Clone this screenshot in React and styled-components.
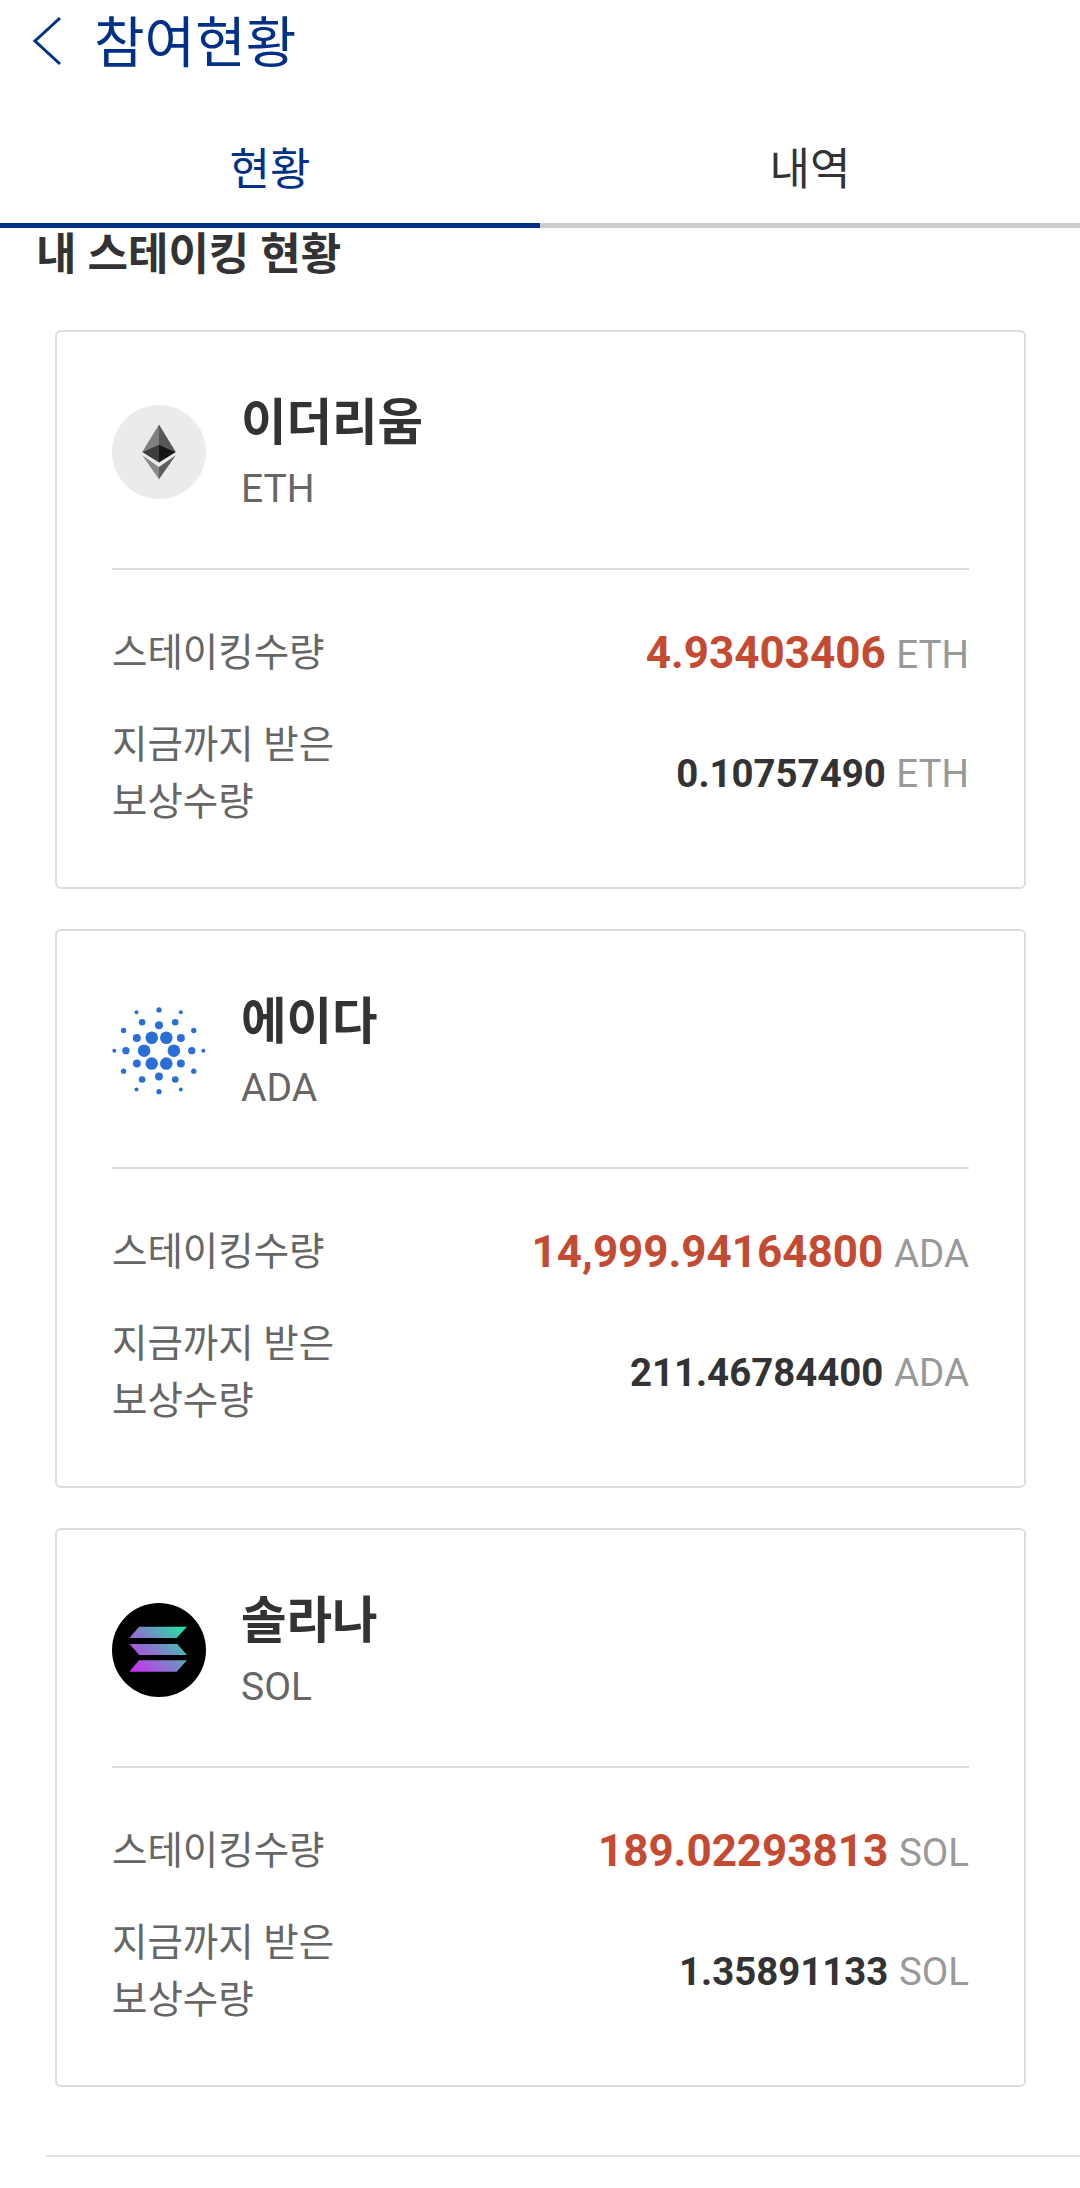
import React from "react";
import styled, { createGlobalStyle } from "styled-components";

const GlobalStyle = createGlobalStyle`
  html, body {
    margin: 0;
    padding: 0;
    background: #fff;
  }
  body {
    font-family: Roboto, "Noto Sans CJK KR", sans-serif;
  }
  * {
    box-sizing: border-box;
  }
`;

const ADA_DOTS = [
  [185, 173, 19], [229, 173, 19], [162, 212, 19], [252, 212, 19], [185, 251, 19], [229, 251, 19],
  [140, 174, 12], [273, 174, 12], [107, 212, 11], [306, 212, 11], [140, 251, 12], [273, 251, 12],
  [207, 135, 12], [207, 290, 12],
  [156, 126, 10], [256, 126, 10], [156, 299, 10], [256, 299, 10],
  [100, 151, 8], [312, 151, 8], [100, 274, 8], [312, 274, 8],
  [139, 96, 6], [273, 96, 6], [139, 329, 6], [273, 329, 6],
  [207, 89, 8], [207, 336, 8], [72, 212, 6], [341, 212, 6],
];

const EthIcon = () => (
  <svg width="94" height="94" viewBox="67 47 280 280">
    <circle cx="207" cy="187" r="140" fill="#ebebeb" />
    <polygon points="207,105 157,187 207,165" fill="#808080" />
    <polygon points="207,105 257,187 207,165" fill="#565656" />
    <polygon points="207,165 157,187 207,218" fill="#3c3c3c" />
    <polygon points="207,165 257,187 207,218" fill="#161616" />
    <polygon points="157,197 207,268 207,232" fill="#8a8a8a" />
    <polygon points="257,197 207,268 207,232" fill="#5e5e5e" />
  </svg>
);

const AdaIcon = () => (
  <svg width="94" height="94" viewBox="65 71 284 284">
    {ADA_DOTS.map(([x, y, r], i) => (
      <circle key={i} cx={x} cy={y} r={r} fill="#2a6fd6" />
    ))}
  </svg>
);

const SolIcon = () => (
  <svg width="94" height="94" viewBox="66 69 282 282">
    <defs>
      <linearGradient id="solGrad" gradientUnits="userSpaceOnUse" x1="125" y1="285" x2="285" y2="130">
        <stop offset="0" stopColor="#cf2bf2" />
        <stop offset="0.5" stopColor="#7d82c8" />
        <stop offset="1" stopColor="#16f0a0" />
      </linearGradient>
    </defs>
    <circle cx="207" cy="210" r="141" fill="#000" />
    <polygon points="147,140 291,140 260,174 118,174" fill="url(#solGrad)" />
    <polygon points="118,192 262,192 291,225 148,225" fill="url(#solGrad)" />
    <polygon points="147,241 291,241 260,275 118,275" fill="url(#solGrad)" />
  </svg>
);

const COINS = [
  { name: "이더리움", unit: "ETH", staked: "4.93403406", reward: "0.10757490", icon: <EthIcon /> },
  { name: "에이다", unit: "ADA", staked: "14,999.94164800", reward: "211.46784400", icon: <AdaIcon /> },
  { name: "솔라나", unit: "SOL", staked: "189.02293813", reward: "1.35891133", icon: <SolIcon /> },
];

export default function App() {
  return (
    <Page>
      <GlobalStyle />
      <Header>
        <BackIcon width="30" height="50" viewBox="0 0 30 50">
          <polyline points="28,2 3,25 28,48" />
        </BackIcon>
        <HeaderTitle>참여현황</HeaderTitle>
      </Header>
      <Tabs>
        <Tab $active>현황</Tab>
        <Tab>내역</Tab>
      </Tabs>
      <SectionTitle>내 스테이킹 현황</SectionTitle>
      <CardList>
        {COINS.map((coin) => (
          <Card key={coin.unit}>
            <CardHead>
              <IconWrap>{coin.icon}</IconWrap>
              <CoinText>
                <CoinName>{coin.name}</CoinName>
                <CoinUnit>{coin.unit}</CoinUnit>
              </CoinText>
            </CardHead>
            <Row>
              <Label>스테이킹수량</Label>
              <Value>
                <Amount $red>{coin.staked}</Amount> <Unit>{coin.unit}</Unit>
              </Value>
            </Row>
            <RewardRow>
              <Label>
                지금까지 받은
                <br />
                보상수량
              </Label>
              <Value>
                <Amount>{coin.reward}</Amount> <Unit>{coin.unit}</Unit>
              </Value>
            </RewardRow>
          </Card>
        ))}
      </CardList>
      <FooterLine />
    </Page>
  );
}

const Page = styled.div`
  width: 1080px;
  height: 2188px;
  overflow: hidden;
  background: #fff;
`;

const Header = styled.div`
  display: flex;
  align-items: center;
  height: 80px;
  padding-left: 32px;
`;

const BackIcon = styled.svg`
  flex: none;
  fill: none;
  stroke: #003087;
  stroke-width: 3;
  margin-top: 2px;
`;

const HeaderTitle = styled.div`
  margin: 5px 0 0 32px;
  font-size: 55px;
  line-height: 80px;
  color: #003087;
`;

const Tabs = styled.div`
  display: flex;
  height: 148px;
`;

const Tab = styled.div`
  flex: 1;
  display: flex;
  align-items: center;
  justify-content: center;
  padding-top: 28px;
  font-size: 44px;
  color: ${(p) => (p.$active ? "#003087" : "#333")};
  border-bottom: 5px solid ${(p) => (p.$active ? "#003087" : "#ccc")};
`;

const SectionTitle = styled.div`
  height: 50px;
  padding: 2px 0 0 36px;
  font-size: 44px;
  font-weight: 700;
  line-height: 50px;
  color: #333;
`;

const CardList = styled.div`
  display: flex;
  flex-direction: column;
  gap: 40px;
  margin-top: 52px;
  padding: 0 54px 0 55px;
`;

const Card = styled.div`
  height: 559px;
  padding: 0 55px;
  border: 2px solid #ddd;
  border-radius: 6px;
`;

const CardHead = styled.div`
  display: flex;
  align-items: center;
  height: 238px;
  border-bottom: 2px solid #ddd;
`;

const IconWrap = styled.div`
  display: flex;
  flex: none;
  width: 94px;
  height: 94px;
  margin-top: 4px;
`;

const CoinText = styled.div`
  margin-left: 35px;
  padding-top: 3px;
`;

const CoinName = styled.div`
  font-size: 49.5px;
  font-weight: 700;
  line-height: 68px;
  color: #333;
`;

const CoinUnit = styled.div`
  margin-top: 6px;
  font-size: 39px;
  line-height: 52px;
  color: #666;
`;

const Row = styled.div`
  display: flex;
  align-items: center;
  justify-content: space-between;
  height: 57px;
  margin-top: 54px;
`;

const RewardRow = styled(Row)`
  height: 114px;
  margin-top: 35px;
`;

const Label = styled.div`
  font-size: 38.5px;
  line-height: 57px;
  color: #666;
`;

const Value = styled.div`
  font-size: 38.5px;
  white-space: nowrap;
`;

const Amount = styled.span`
  font-size: ${(p) => (p.$red ? "44px" : "38.4px")};
  font-weight: 700;
  color: ${(p) => (p.$red ? "#c44a32" : "#333")};
`;

const Unit = styled.span`
  margin-left: 1px;
  font-size: 38.5px;
  color: #999;
`;

const FooterLine = styled.div`
  height: 2px;
  margin: 68px 0 0 46px;
  background: #e4e4e4;
`;
